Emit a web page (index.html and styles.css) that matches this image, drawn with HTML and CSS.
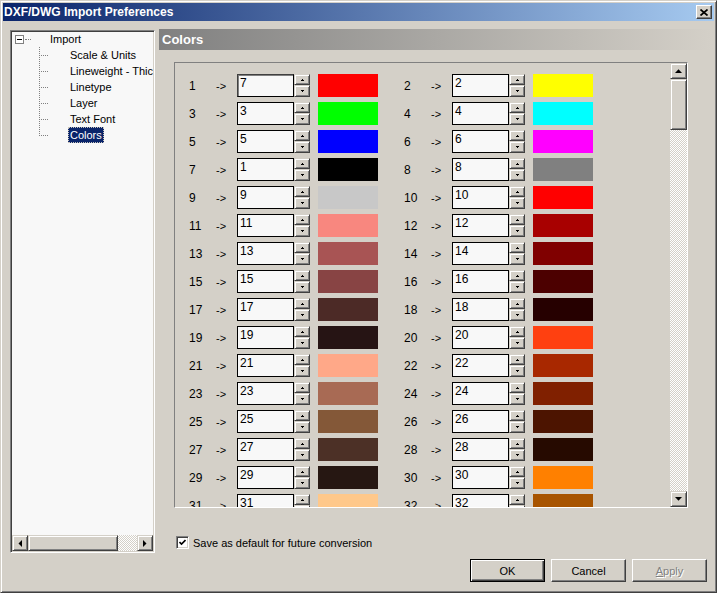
FILE: index.html
```html
<!DOCTYPE html>
<html>
<head>
<meta charset="utf-8">
<link rel="stylesheet" href="styles.css">
</head>
<body>
<div class="window">
  <div class="titlebar">
    <span class="title">DXF/DWG Import Preferences</span>
    <span class="close"><svg width="8" height="7" viewBox="0 0 8 7"><path d="M0.5 0.5L7.5 6.5M7.5 0.5L0.5 6.5" stroke="#000" stroke-width="1.7" fill="none"/></svg></span>
  </div>
  <div class="main">
    <div class="tree">
      <div class="tree-body">
        <div class="root-row"><span class="expander"></span><span class="hdots"></span><span class="root-label">Import</span></div>
        <div class="subtree">
          <svg class="lines" width="56" height="96" viewBox="0 0 56 96"><g stroke="#808080" stroke-dasharray="1 1" shape-rendering="crispEdges" fill="none"><path d="M27.5 0V89"/><path d="M29 8.5H37M29 24.5H37M29 40.5H37M29 56.5H37M29 72.5H37M29 88.5H37"/></g></svg>
          <ul class="items">
            <li><span>Scale &amp; Units</span></li>
            <li><span>Lineweight - Thickness</span></li>
            <li><span>Linetype</span></li>
            <li><span>Layer</span></li>
            <li><span>Text Font</span></li>
            <li class="sel"><span>Colors</span></li>
          </ul>
        </div>
      </div>
      <div class="hscroll">
        <div class="sbtn"><svg width="4" height="7" viewBox="0 0 4 7"><polygon points="4,0 4,7 0.5,3.5" fill="#000"/></svg></div>
        <div class="hthumb raised"></div>
        <div class="track"></div>
        <div class="sbtn"><svg width="4" height="7" viewBox="0 0 4 7"><polygon points="0,0 0,7 3.5,3.5" fill="#000"/></svg></div>
      </div>
    </div>
    <div class="pane">
      <div class="pane-header">Colors</div>
      <div class="groupbox">
        <div class="rows">
          <div class="row">
            <div class="pair"><span class="num">1</span><span class="arr">-&gt;</span><div class="field"><span class="input focus">7</span><span class="spin"><span class="sb up"></span><span class="sb down"></span></span></div><span class="swatch" style="background:#ff0000"></span></div>
            <div class="pair"><span class="num">2</span><span class="arr">-&gt;</span><div class="field"><span class="input">2</span><span class="spin"><span class="sb up"></span><span class="sb down"></span></span></div><span class="swatch" style="background:#ffff00"></span></div>
          </div>
          <div class="row">
            <div class="pair"><span class="num">3</span><span class="arr">-&gt;</span><div class="field"><span class="input">3</span><span class="spin"><span class="sb up"></span><span class="sb down"></span></span></div><span class="swatch" style="background:#00ff00"></span></div>
            <div class="pair"><span class="num">4</span><span class="arr">-&gt;</span><div class="field"><span class="input">4</span><span class="spin"><span class="sb up"></span><span class="sb down"></span></span></div><span class="swatch" style="background:#00ffff"></span></div>
          </div>
          <div class="row">
            <div class="pair"><span class="num">5</span><span class="arr">-&gt;</span><div class="field"><span class="input">5</span><span class="spin"><span class="sb up"></span><span class="sb down"></span></span></div><span class="swatch" style="background:#0000ff"></span></div>
            <div class="pair"><span class="num">6</span><span class="arr">-&gt;</span><div class="field"><span class="input">6</span><span class="spin"><span class="sb up"></span><span class="sb down"></span></span></div><span class="swatch" style="background:#ff00ff"></span></div>
          </div>
          <div class="row">
            <div class="pair"><span class="num">7</span><span class="arr">-&gt;</span><div class="field"><span class="input">1</span><span class="spin"><span class="sb up"></span><span class="sb down"></span></span></div><span class="swatch" style="background:#000000"></span></div>
            <div class="pair"><span class="num">8</span><span class="arr">-&gt;</span><div class="field"><span class="input">8</span><span class="spin"><span class="sb up"></span><span class="sb down"></span></span></div><span class="swatch" style="background:#808080"></span></div>
          </div>
          <div class="row">
            <div class="pair"><span class="num">9</span><span class="arr">-&gt;</span><div class="field"><span class="input">9</span><span class="spin"><span class="sb up"></span><span class="sb down"></span></span></div><span class="swatch" style="background:#c8c8c8"></span></div>
            <div class="pair"><span class="num">10</span><span class="arr">-&gt;</span><div class="field"><span class="input">10</span><span class="spin"><span class="sb up"></span><span class="sb down"></span></span></div><span class="swatch" style="background:#ff0000"></span></div>
          </div>
          <div class="row">
            <div class="pair"><span class="num">11</span><span class="arr">-&gt;</span><div class="field"><span class="input">11</span><span class="spin"><span class="sb up"></span><span class="sb down"></span></span></div><span class="swatch" style="background:#f8877f"></span></div>
            <div class="pair"><span class="num">12</span><span class="arr">-&gt;</span><div class="field"><span class="input">12</span><span class="spin"><span class="sb up"></span><span class="sb down"></span></span></div><span class="swatch" style="background:#a80000"></span></div>
          </div>
          <div class="row">
            <div class="pair"><span class="num">13</span><span class="arr">-&gt;</span><div class="field"><span class="input">13</span><span class="spin"><span class="sb up"></span><span class="sb down"></span></span></div><span class="swatch" style="background:#a85454"></span></div>
            <div class="pair"><span class="num">14</span><span class="arr">-&gt;</span><div class="field"><span class="input">14</span><span class="spin"><span class="sb up"></span><span class="sb down"></span></span></div><span class="swatch" style="background:#800000"></span></div>
          </div>
          <div class="row">
            <div class="pair"><span class="num">15</span><span class="arr">-&gt;</span><div class="field"><span class="input">15</span><span class="spin"><span class="sb up"></span><span class="sb down"></span></span></div><span class="swatch" style="background:#884444"></span></div>
            <div class="pair"><span class="num">16</span><span class="arr">-&gt;</span><div class="field"><span class="input">16</span><span class="spin"><span class="sb up"></span><span class="sb down"></span></span></div><span class="swatch" style="background:#4c0000"></span></div>
          </div>
          <div class="row">
            <div class="pair"><span class="num">17</span><span class="arr">-&gt;</span><div class="field"><span class="input">17</span><span class="spin"><span class="sb up"></span><span class="sb down"></span></span></div><span class="swatch" style="background:#4c2a26"></span></div>
            <div class="pair"><span class="num">18</span><span class="arr">-&gt;</span><div class="field"><span class="input">18</span><span class="spin"><span class="sb up"></span><span class="sb down"></span></span></div><span class="swatch" style="background:#260000"></span></div>
          </div>
          <div class="row">
            <div class="pair"><span class="num">19</span><span class="arr">-&gt;</span><div class="field"><span class="input">19</span><span class="spin"><span class="sb up"></span><span class="sb down"></span></span></div><span class="swatch" style="background:#261414"></span></div>
            <div class="pair"><span class="num">20</span><span class="arr">-&gt;</span><div class="field"><span class="input">20</span><span class="spin"><span class="sb up"></span><span class="sb down"></span></span></div><span class="swatch" style="background:#ff4010"></span></div>
          </div>
          <div class="row">
            <div class="pair"><span class="num">21</span><span class="arr">-&gt;</span><div class="field"><span class="input">21</span><span class="spin"><span class="sb up"></span><span class="sb down"></span></span></div><span class="swatch" style="background:#ffa888"></span></div>
            <div class="pair"><span class="num">22</span><span class="arr">-&gt;</span><div class="field"><span class="input">22</span><span class="spin"><span class="sb up"></span><span class="sb down"></span></span></div><span class="swatch" style="background:#a82800"></span></div>
          </div>
          <div class="row">
            <div class="pair"><span class="num">23</span><span class="arr">-&gt;</span><div class="field"><span class="input">23</span><span class="spin"><span class="sb up"></span><span class="sb down"></span></span></div><span class="swatch" style="background:#a86a54"></span></div>
            <div class="pair"><span class="num">24</span><span class="arr">-&gt;</span><div class="field"><span class="input">24</span><span class="spin"><span class="sb up"></span><span class="sb down"></span></span></div><span class="swatch" style="background:#802000"></span></div>
          </div>
          <div class="row">
            <div class="pair"><span class="num">25</span><span class="arr">-&gt;</span><div class="field"><span class="input">25</span><span class="spin"><span class="sb up"></span><span class="sb down"></span></span></div><span class="swatch" style="background:#845838"></span></div>
            <div class="pair"><span class="num">26</span><span class="arr">-&gt;</span><div class="field"><span class="input">26</span><span class="spin"><span class="sb up"></span><span class="sb down"></span></span></div><span class="swatch" style="background:#4c1400"></span></div>
          </div>
          <div class="row">
            <div class="pair"><span class="num">27</span><span class="arr">-&gt;</span><div class="field"><span class="input">27</span><span class="spin"><span class="sb up"></span><span class="sb down"></span></span></div><span class="swatch" style="background:#4c3026"></span></div>
            <div class="pair"><span class="num">28</span><span class="arr">-&gt;</span><div class="field"><span class="input">28</span><span class="spin"><span class="sb up"></span><span class="sb down"></span></span></div><span class="swatch" style="background:#260a00"></span></div>
          </div>
          <div class="row">
            <div class="pair"><span class="num">29</span><span class="arr">-&gt;</span><div class="field"><span class="input">29</span><span class="spin"><span class="sb up"></span><span class="sb down"></span></span></div><span class="swatch" style="background:#261712"></span></div>
            <div class="pair"><span class="num">30</span><span class="arr">-&gt;</span><div class="field"><span class="input">30</span><span class="spin"><span class="sb up"></span><span class="sb down"></span></span></div><span class="swatch" style="background:#ff8000"></span></div>
          </div>
          <div class="row">
            <div class="pair"><span class="num">31</span><span class="arr">-&gt;</span><div class="field"><span class="input">31</span><span class="spin"><span class="sb up"></span><span class="sb down"></span></span></div><span class="swatch" style="background:#ffc88a"></span></div>
            <div class="pair"><span class="num">32</span><span class="arr">-&gt;</span><div class="field"><span class="input">32</span><span class="spin"><span class="sb up"></span><span class="sb down"></span></span></div><span class="swatch" style="background:#a85400"></span></div>
          </div>
        </div>
        <div class="vscroll">
          <div class="sbtn"><svg width="7" height="4" viewBox="0 0 7 4"><polygon points="0,4 7,4 3.5,0.3" fill="#000"/></svg></div>
          <div class="vthumb raised"></div>
          <div class="track"></div>
          <div class="sbtn"><svg width="7" height="4" viewBox="0 0 7 4"><polygon points="0,0 7,0 3.5,3.7" fill="#000"/></svg></div>
        </div>
      </div>
      <div class="save">
        <span class="checkbox"><svg width="7" height="7" viewBox="0 0 7 7"><polyline points="0.5,3 2.5,5 6.5,1" stroke="#000" stroke-width="1.6" fill="none"/></svg></span>
        <span>Save as default for future conversion</span>
      </div>
    </div>
  </div>
  <div class="buttons">
    <div class="btn default">OK</div>
    <div class="btn">Cancel</div>
    <div class="btn disabled"><span><u>A</u>pply</span></div>
  </div>
</div>
</body>
</html>
```

FILE: styles.css
```css
html, body {
  margin: 0;
  padding: 0;
  background: #d4d0c8;
  overflow: hidden;
}
body {
  font-family: "Liberation Sans", Arial, sans-serif;
  font-size: 11px;
  color: #000;
}
.window {
  width: 717px;
  height: 593px;
  box-sizing: border-box;
  border: 1px solid;
  border-color: #d4d0c8 #404040 #404040 #d4d0c8;
  box-shadow: inset 1px 1px 0 #fff, inset -1px -1px 0 #808080;
  padding: 2px;
  display: flex;
  flex-direction: column;
  background: #d4d0c8;
}
.titlebar {
  height: 18px;
  flex: none;
  background: linear-gradient(to right, #0a246a, #a6caf0);
  display: flex;
  align-items: center;
  justify-content: space-between;
  color: #fff;
  font-weight: bold;
  font-size: 12px;
  padding: 0 2px 0 1px;
}
.close {
  width: 16px;
  height: 14px;
  box-sizing: border-box;
  background: #d4d0c8;
  border: 1px solid;
  border-color: #fff #404040 #404040 #fff;
  box-shadow: inset -1px -1px 0 #808080;
  display: flex;
  align-items: center;
  justify-content: center;
}
.main {
  display: flex;
  padding: 8px 0 0 7px;
  flex: none;
}
.tree {
  width: 145px;
  height: 523px;
  margin-top: 1px;
  box-sizing: border-box;
  border: 1px solid;
  border-color: #808080 #fff #fff #808080;
  box-shadow: inset 1px 1px 0 #404040, inset -1px -1px 0 #d4d0c8;
  padding: 1px;
  background: #f8f8f8;
  display: flex;
  flex-direction: column;
  flex: none;
}
.tree-body {
  flex: 1;
  overflow: hidden;
  white-space: nowrap;
}
.root-row {
  height: 15px;
  display: flex;
  align-items: center;
}
.expander {
  width: 9px;
  height: 9px;
  box-sizing: border-box;
  border: 1px solid #808080;
  background: #fff;
  margin-left: 3px;
  display: flex;
  align-items: center;
  justify-content: center;
  flex: none;
}
.expander::after {
  content: "";
  width: 5px;
  height: 1px;
  background: #000;
}
.hdots {
  width: 6px;
  height: 0;
  margin-left: 1px;
  border-top: 1px dotted #808080;
  flex: none;
}
.root-label {
  margin-left: 17px;
  padding: 0 2px;
  line-height: 15px;
}
.subtree {
  display: flex;
}
.lines {
  flex: none;
  display: block;
}
.items {
  list-style: none;
  margin: 0;
  padding: 0;
}
.items li {
  height: 16px;
  display: flex;
  align-items: center;
}
.items li span {
  padding: 0 2px;
  line-height: 16px;
  height: 16px;
}
.items li.sel span {
  background: #0a246a;
  color: #fff;
  outline: 1px dotted #c8c4bc;
  outline-offset: -1px;
}
.hscroll {
  height: 16px;
  display: flex;
  flex: none;
}
.sbtn, .raised {
  box-sizing: border-box;
  background: #d4d0c8;
  border: 1px solid;
  border-color: #d4d0c8 #404040 #404040 #d4d0c8;
  box-shadow: inset 1px 1px 0 #fff, inset -1px -1px 0 #808080;
}
.sbtn {
  width: 16px;
  height: 16px;
  display: flex;
  align-items: center;
  justify-content: center;
  flex: none;
}
.hthumb {
  width: 90px;
  flex: none;
}
.track {
  flex: 1;
  background: repeating-conic-gradient(#d4d0c8 0 25%, #ffffff 0 50%) 0 0 / 2px 2px;
}
.pane {
  margin-left: 4px;
  width: 554px;
  display: flex;
  flex-direction: column;
  flex: none;
}
.pane-header {
  height: 21px;
  background: linear-gradient(to right, #808080, #d4d0c8);
  color: #fff;
  font-weight: bold;
  font-size: 13px;
  line-height: 21px;
  padding-left: 3px;
}
.groupbox {
  margin: 12px 0 0 15px;
  width: 514px;
  height: 446px;
  box-sizing: border-box;
  border: 1px solid;
  border-color: #808080 #fff #fff #808080;
  display: flex;
}
.rows {
  flex: 1;
  overflow: hidden;
  padding: 11px 0 0 14px;
}
.row {
  display: flex;
  height: 23px;
  margin-bottom: 5px;
}
.pair {
  display: flex;
  align-items: center;
  width: 215px;
  flex: none;
}
.num {
  width: 27px;
  font-size: 12px;
  flex: none;
}
.arr {
  width: 21px;
  font-size: 11px;
  flex: none;
}
.field {
  display: flex;
  flex: none;
}
.input {
  width: 57px;
  height: 23px;
  box-sizing: border-box;
  border: 1px solid #000;
  background: #f8f8f8;
  font-size: 12px;
  line-height: 14px;
  padding: 1px 0 0 2px;
}
.input.focus {
  border-color: #404040 #000 #000 #404040;
  box-shadow: inset 1px 1px 0 #808080;
}
.spin {
  width: 16px;
  height: 23px;
  display: flex;
  flex-direction: column;
}
.sb {
  box-sizing: border-box;
  background: #d4d0c8;
  border: 1px solid;
  border-color: #d4d0c8 #404040 #404040 #d4d0c8;
  box-shadow: inset 1px 1px 0 #fff, inset -1px -1px 0 #808080;
  display: flex;
  align-items: center;
  justify-content: center;
}
.sb.up {
  height: 11px;
}
.sb.down {
  height: 12px;
}
.sb::after {
  content: "";
  width: 1px;
  height: 1px;
  background: #000;
}
.sb.up::after {
  margin-top: -1px;
  box-shadow: -1px 1px 0 #000, 0 1px 0 #000, 1px 1px 0 #000;
}
.sb.down::after {
  margin-top: 1px;
  box-shadow: -1px -1px 0 #000, 0 -1px 0 #000, 1px -1px 0 #000;
}
.swatch {
  width: 60px;
  height: 23px;
  margin-left: 8px;
  flex: none;
}
.vscroll {
  width: 17px;
  display: flex;
  flex-direction: column;
  flex: none;
}
.vscroll .sbtn {
  width: 17px;
  height: 16px;
}
.vthumb {
  height: 51px;
  flex: none;
}
.save {
  display: flex;
  align-items: center;
  margin: 28px 0 0 17px;
  height: 13px;
  gap: 4px;
}
.checkbox {
  width: 13px;
  height: 13px;
  box-sizing: border-box;
  border: 1px solid;
  border-color: #808080 #fff #fff #808080;
  box-shadow: inset 1px 1px 0 #404040, inset -1px -1px 0 #d4d0c8;
  background: #fff;
  display: flex;
  align-items: center;
  justify-content: center;
  flex: none;
}
.buttons {
  display: flex;
  justify-content: flex-end;
  gap: 6px;
  margin-top: 6px;
  padding-right: 7px;
}
.btn {
  width: 75px;
  height: 23px;
  box-sizing: border-box;
  background: #d4d0c8;
  border: 1px solid;
  border-color: #fff #404040 #404040 #fff;
  box-shadow: inset -1px -1px 0 #808080;
  display: flex;
  align-items: center;
  justify-content: center;
  font-size: 11px;
}
.btn.default {
  border-color: #000;
  box-shadow: inset 1px 1px 0 #fff, inset -1px -1px 0 #404040, inset -2px -2px 0 #808080;
}
.btn.disabled {
  color: #808080;
  text-shadow: 1px 1px 0 #fff;
}
```
